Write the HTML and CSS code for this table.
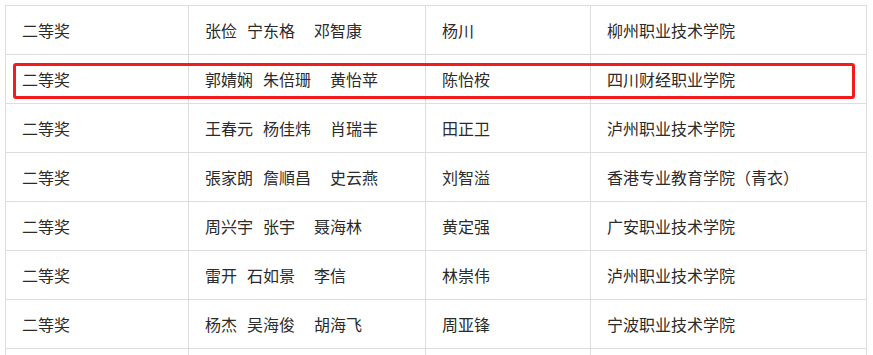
FILE: index.html
```html
<!DOCTYPE html>
<html lang="zh-CN">
<head>
<meta charset="utf-8">
<title>获奖名单</title>
<link rel="stylesheet" href="styles.css">
</head>
<body>
<div class="wrap">
  <div class="grid">
    <div class="cell">二等奖</div>
    <div class="cell names"><span class="n1">张俭</span><span class="n2">宁东格</span><span>邓智康</span></div>
    <div class="cell">杨川</div>
    <div class="cell">柳州职业技术学院</div>

    <div class="cell">二等奖</div>
    <div class="cell names"><span class="n1">郭婧娴</span><span class="n2">朱倍珊</span><span>黄怡苹</span></div>
    <div class="cell">陈怡桉</div>
    <div class="cell">四川财经职业学院</div>

    <div class="cell">二等奖</div>
    <div class="cell names"><span class="n1">王春元</span><span class="n2">杨佳炜</span><span>肖瑞丰</span></div>
    <div class="cell">田正卫</div>
    <div class="cell">泸州职业技术学院</div>

    <div class="cell">二等奖</div>
    <div class="cell names"><span class="n1">張家朗</span><span class="n2">詹順昌</span><span>史云燕</span></div>
    <div class="cell">刘智溢</div>
    <div class="cell">香港专业教育学院（青衣）</div>

    <div class="cell">二等奖</div>
    <div class="cell names"><span class="n1">周兴宇</span><span class="n2">张宇</span><span>聂海林</span></div>
    <div class="cell">黄定强</div>
    <div class="cell">广安职业技术学院</div>

    <div class="cell">二等奖</div>
    <div class="cell names"><span class="n1">雷开</span><span class="n2">石如景</span><span>李信</span></div>
    <div class="cell">林崇伟</div>
    <div class="cell">泸州职业技术学院</div>

    <div class="cell">二等奖</div>
    <div class="cell names"><span class="n1">杨杰</span><span class="n2">吴海俊</span><span>胡海飞</span></div>
    <div class="cell">周亚锋</div>
    <div class="cell">宁波职业技术学院</div>

    <div class="cell"></div>
    <div class="cell"></div>
    <div class="cell"></div>
    <div class="cell"></div>
  </div>
  <div class="highlight"></div>
</div>
</body>
</html>
```

FILE: styles.css
```css
html, body {
  margin: 0;
  padding: 0;
  background: #ffffff;
}
body {
  font-family: "Noto Sans CJK SC", "Microsoft YaHei", sans-serif;
  font-size: 16px;
  color: #2b2b2b;
  overflow: hidden;
}
.wrap {
  position: relative;
  margin: 5px 0 0 5px;
  width: 862px;
}
.grid {
  display: grid;
  grid-template-columns: 183px 237px 165px 276px;
  grid-auto-rows: 49px;
  border-left: 1px solid #dddddd;
  border-top: 1px solid #dddddd;
}
.cell {
  border-right: 1px solid #dddddd;
  border-bottom: 1px solid #dddddd;
  padding-left: 16px;
  display: flex;
  align-items: center;
  white-space: nowrap;
  line-height: 1;
}
.names .n1 {
  margin-right: 10px;
}
.names .n2 {
  margin-right: 19px;
}
.highlight {
  position: absolute;
  left: 8px;
  top: 58px;
  width: 836px;
  height: 30px;
  border: 3px solid #f21c1c;
  border-radius: 3px;
  pointer-events: none;
}
```
